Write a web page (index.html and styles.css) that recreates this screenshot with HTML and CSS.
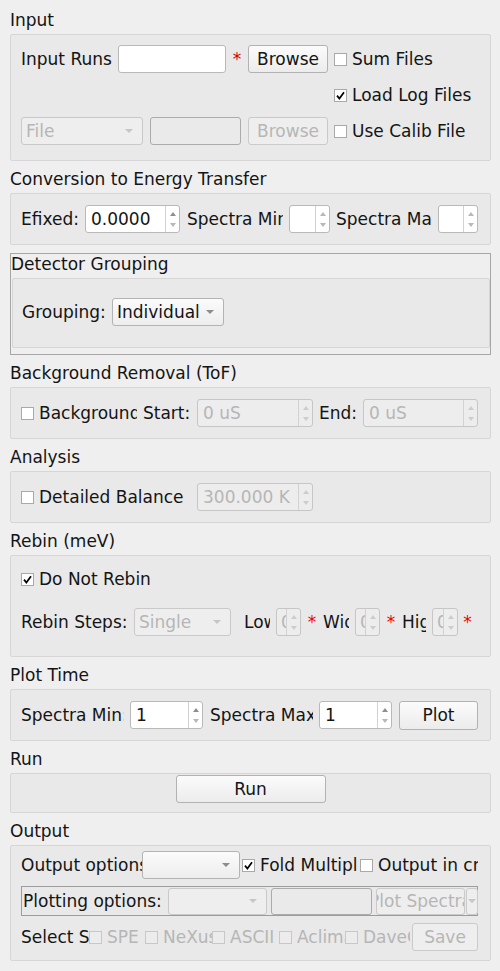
FILE: index.html
```html
<!DOCTYPE html>
<html>
<head>
<meta charset="utf-8">
<link rel="stylesheet" href="styles.css">
</head>
<body>
<div class="page">
  <div class="title">Input</div>
  <div class="frame f-input">
    <div class="row">
      <span class="lbl w97">Input Runs</span>
      <div class="edit w108"></div>
      <span class="ast w22">*</span>
      <div class="btn w80"><span>Browse</span></div>
      <div class="cb ml6"><span class="box"></span><span>Sum Files</span></div>
    </div>
    <div class="row">
      <div class="cb ml313"><span class="box"><svg class="chk" width="11" height="11" viewBox="0 0 11 11"><path d="M2 5.6 L4.4 8.6 L9 2.2" /></svg></span><span>Load Log Files</span></div>
    </div>
    <div class="row">
      <div class="combo dis w122"><span class="ctext">File</span><span class="carr"></span></div>
      <div class="edit dis ml7 w91"></div>
      <div class="btn dis ml7 w80"><span>Browse</span></div>
      <div class="cb ml6"><span class="box"></span><span>Use Calib File</span></div>
    </div>
  </div>

  <div class="title">Conversion to Energy Transfer</div>
  <div class="frame f-one">
    <div class="row">
      <span class="lbl w64">Efixed:</span>
      <div class="spin w95"><span class="sval">0.0000</span><span class="sbtn"><i class="up"></i><i class="dn"></i></span></div>
      <span class="lbl ml7 w96">Spectra Min:</span>
      <div class="spin ml6 w41"><span class="sval"></span><span class="sbtn"><i class="up lt"></i><i class="dn"></i></span></div>
      <span class="lbl ml6 w96">Spectra Max:</span>
      <div class="spin ml6 w40"><span class="sval"></span><span class="sbtn"><i class="up lt"></i><i class="dn"></i></span></div>
    </div>
  </div>

  <div class="dgroup">
    <div class="dtitle">Detector Grouping</div>
    <div class="frame f-group">
      <div class="row">
        <span class="lbl w90">Grouping:</span>
        <div class="combo w112"><span class="ctext">Individual</span><span class="carr"></span></div>
      </div>
    </div>
  </div>

  <div class="title">Background Removal (ToF)</div>
  <div class="frame f-one">
    <div class="row">
      <div class="cb w116"><span class="box"></span><span>Background Removal</span></div>
      <span class="lbl ml6 w54">Start:</span>
      <div class="spin dis w116"><span class="sval">0 uS</span><span class="sbtn"><i class="up"></i><i class="dn"></i></span></div>
      <span class="lbl ml6 w44">End:</span>
      <div class="spin dis w115"><span class="sval">0 uS</span><span class="sbtn"><i class="up"></i><i class="dn"></i></span></div>
    </div>
  </div>

  <div class="title">Analysis</div>
  <div class="frame f-one">
    <div class="row">
      <div class="cb w176"><span class="box"></span><span>Detailed Balance</span></div>
      <div class="spin dis w116"><span class="sval">300.000 K</span><span class="sbtn"><i class="up"></i><i class="dn"></i></span></div>
    </div>
  </div>

  <div class="title">Rebin (meV)</div>
  <div class="frame f-rebin">
    <div class="row">
      <div class="cb"><span class="box"><svg class="chk" width="11" height="11" viewBox="0 0 11 11"><path d="M2 5.6 L4.4 8.6 L9 2.2" /></svg></span><span>Do Not Rebin</span></div>
    </div>
    <div class="row">
      <span class="lbl w113">Rebin Steps:</span>
      <div class="combo dis w97"><span class="ctext">Single</span><span class="carr"></span></div>
      <span class="lbl ml13 w26">Low</span>
      <div class="spin dis small ml6 w25"><span class="sval">0.0</span><span class="sbtn"><i class="up"></i><i class="dn"></i></span></div>
      <span class="ast2 w22">*</span>
      <span class="lbl w26">Width</span>
      <div class="spin dis small ml6 w25"><span class="sval">0.0</span><span class="sbtn"><i class="up"></i><i class="dn"></i></span></div>
      <span class="ast2 w22">*</span>
      <span class="lbl w24">High</span>
      <div class="spin dis small ml6 w26"><span class="sval">0.0</span><span class="sbtn"><i class="up"></i><i class="dn"></i></span></div>
      <span class="ast2 w19">*</span>
    </div>
  </div>

  <div class="title">Plot Time</div>
  <div class="frame f-one">
    <div class="row">
      <span class="lbl w103">Spectra Min:</span>
      <div class="spin ml6 w73"><span class="sval">1</span><span class="sbtn"><i class="up"></i><i class="dn"></i></span></div>
      <span class="lbl ml7 w103">Spectra Max:</span>
      <div class="spin ml6 w73"><span class="sval">1</span><span class="sbtn"><i class="up"></i><i class="dn"></i></span></div>
      <div class="btn tall ml7 w79"><span>Plot</span></div>
    </div>
  </div>

  <div class="title">Run</div>
  <div class="frame f-run">
    <div class="row">
      <div class="btn w150"><span>Run</span></div>
    </div>
  </div>

  <div class="title">Output</div>
  <div class="frame f-out">
    <div class="row">
      <span class="lbl w121">Output options:</span>
      <div class="combo w98"><span class="ctext"></span><span class="carr"></span></div>
      <div class="cb ml2 w116"><span class="box"><svg class="chk" width="11" height="11" viewBox="0 0 11 11"><path d="M2 5.6 L4.4 8.6 L9 2.2" /></svg></span><span>Fold Multiple Frames</span></div>
      <div class="cb ml2 w118"><span class="box"></span><span>Output in cm-1</span></div>
    </div>
    <div class="plotbox">
      <span class="lbl w145">Plotting options:</span>
      <div class="combo dis short w99"><span class="ctext"></span><span class="carr"></span></div>
      <div class="edit dis short ml4 w101"></div>
      <div class="btn dis short ml4 w89"><span>Plot Spectra</span></div>
      <div class="btn dis short arrbtn ml1 w12"><span class="carr"></span></div>
    </div>
    <div class="row">
      <span class="lbl w68">Select Spectra</span>
      <div class="cb dis w56"><span class="box"></span><span>SPE</span></div>
      <div class="cb dis w67"><span class="box"></span><span>NeXus</span></div>
      <div class="cb dis w67"><span class="box"></span><span>ASCII</span></div>
      <div class="cb dis w66"><span class="box"></span><span>Aclimax</span></div>
      <div class="cb dis w65"><span class="box"></span><span>DaveGrp</span></div>
      <div class="btn dis ml2 w66"><span>Save</span></div>
    </div>
  </div>
</div>
</body>
</html>
```

FILE: styles.css
```css
* { box-sizing: border-box; }
html, body { margin: 0; }
body {
  background: #efefef;
  font-family: "DejaVu Sans", sans-serif;
  font-size: 17px;
  line-height: 20px;
  color: #141414;
  width: 500px;
  height: 971px;
  overflow: hidden;
}
.page { padding: 2px 9px 0 10px; }
.title { height: 32px; padding-top: 8px; white-space: nowrap; }

.frame {
  border: 1px solid #d6d6d6;
  border-radius: 2px;
  background: #e9e9e9;
  display: flex;
  flex-direction: column;
}
.f-input { padding: 10px 10px 15px; gap: 8px; }
.f-one { padding: 11px 10px; }
.f-rebin { padding: 9px 10px 20px; gap: 15px; }
.f-run { padding: 1px 0 9px; align-items: center; }
.f-out { padding: 5px 10px 9px; gap: 7px; }
.f-group { padding: 19px 9px 21px; }

.dgroup {
  margin-top: 8px;
  border: 1px solid #a6a6a6;
  padding: 0 0 6px 1px;
}
.dtitle { height: 24px; margin-left: -1px; white-space: nowrap; }

.row { display: flex; align-items: center; height: 28px; flex: none; }

.lbl { flex: none; white-space: nowrap; overflow: hidden; }
.ast { flex: none; color: #d40000; text-align: center; }
.ast2 { flex: none; color: #f00000; text-align: center; }

.edit {
  flex: none;
  height: 28px;
  background: #fff;
  border: 1px solid #b9b9b9;
  border-radius: 3px;
}
.edit.dis { background: #eaeaea; border-color: #ababab; }

.btn {
  flex: none;
  height: 28px;
  border: 1px solid #b2b2b2;
  border-radius: 3px;
  background: linear-gradient(#fbfbfb, #ececec);
  display: flex;
  align-items: center;
  justify-content: center;
  overflow: hidden;
  white-space: nowrap;
}
.btn > span { flex: none; }
.btn.tall { height: 29px; }
.btn.dis { color: #b6b6b6; border-color: #cacaca; background: #eeeeee; }

.combo {
  flex: none;
  height: 28px;
  display: flex;
  align-items: center;
  border: 1px solid #b3b3b3;
  border-radius: 3px;
  background: linear-gradient(#fbfbfb, #ededed);
  padding: 0 9px 0 4px;
  white-space: nowrap;
}
.ctext { flex: 1; min-width: 0; overflow: hidden; }
.carr {
  flex: none;
  width: 0;
  height: 0;
  border-left: 4px solid transparent;
  border-right: 4px solid transparent;
  border-top: 4px solid #8c8c8c;
}
.combo.dis { background: #eeeeee; border-color: #c9c9c9; color: #b6b6b6; }
.combo.dis .carr, .btn.dis .carr { border-top-color: #c6c6c6; }

.short { height: 27px; }
.arrbtn { padding: 0; }

.spin {
  flex: none;
  height: 28px;
  display: flex;
  border: 1px solid #b9b9b9;
  border-radius: 3px;
  background: #fff;
}
.sval {
  flex: 1;
  min-width: 0;
  overflow: hidden;
  white-space: nowrap;
  padding-left: 5px;
  display: flex;
  align-items: center;
}
.spin.small .sval { padding-left: 4px; }
.sbtn {
  flex: none;
  width: 14px;
  border-left: 1px solid #d2d2d2;
  display: flex;
  flex-direction: column;
  align-items: center;
  justify-content: center;
  gap: 7px;
}
.up, .dn { display: block; width: 0; height: 0; border-left: 3.5px solid transparent; border-right: 3.5px solid transparent; }
.up { border-bottom: 4px solid #8e8e8e; }
.up.lt { border-bottom-color: #b8b8b8; }
.dn { border-top: 4px solid #b8b8b8; }
.spin.dis { background: #ededed; border-color: #c6c6c6; color: #b6b6b6; }
.spin.dis .up { border-bottom-color: #cdcdcd; }
.spin.dis .dn { border-top-color: #cdcdcd; }
.spin.dis .sbtn { border-left-color: #d2d2d2; }

.cb {
  flex: none;
  display: flex;
  align-items: center;
  gap: 5px;
  white-space: nowrap;
  overflow: hidden;
}
.box {
  flex: none;
  width: 13px;
  height: 13px;
  border: 1px solid #a9a9a9;
  background: #fff;
  display: flex;
  align-items: center;
  justify-content: center;
}
.chk path { fill: none; stroke: #000; stroke-width: 1.7; }
.cb.dis { color: #b6b6b6; }
.cb.dis .box { border-color: #c8c8c8; background: #ececec; }

.plotbox {
  flex: none;
  height: 30px;
  width: 457px;
  border: 1px solid #9c9c9c;
  display: flex;
  align-items: center;
  padding: 0 0 0 1px;
}

.ml1 { margin-left: 1px; } .ml2 { margin-left: 2px; } .ml4 { margin-left: 4px; }
.ml6 { margin-left: 6px; } .ml7 { margin-left: 7px; } .ml13 { margin-left: 13px; }
.ml313 { margin-left: 313px; }
.w12 { width: 12px; } .w19 { width: 19px; } .w22 { width: 22px; } .w24 { width: 24px; }
.w25 { width: 25px; } .w26 { width: 26px; } .w40 { width: 40px; } .w41 { width: 41px; }
.w44 { width: 44px; } .w54 { width: 54px; } .w56 { width: 56px; } .w64 { width: 64px; }
.w65 { width: 65px; } .w66 { width: 66px; } .w67 { width: 67px; } .w68 { width: 68px; }
.w73 { width: 73px; } .w79 { width: 79px; } .w80 { width: 80px; } .w89 { width: 89px; }
.w90 { width: 90px; } .w91 { width: 91px; } .w95 { width: 95px; } .w96 { width: 96px; }
.w97 { width: 97px; } .w98 { width: 98px; } .w99 { width: 99px; } .w101 { width: 101px; }
.w103 { width: 103px; } .w108 { width: 108px; } .w112 { width: 112px; } .w113 { width: 113px; }
.w115 { width: 115px; } .w116 { width: 116px; } .w118 { width: 118px; } .w121 { width: 121px; }
.w122 { width: 122px; } .w145 { width: 145px; } .w150 { width: 150px; } .w176 { width: 176px; }
```
